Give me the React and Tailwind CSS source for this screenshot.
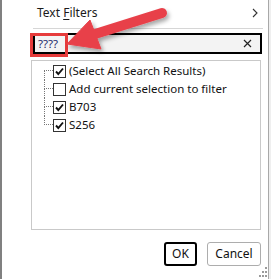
import React from 'react';

const ITEMS = [
  { label: '(Select All Search Results)', checked: true },
  { label: 'Add current selection to filter', checked: false },
  { label: 'B703', checked: true },
  { label: 'S256', checked: true },
];

const CheckBox = ({ checked }) => (
  <span className="w-[13px] h-[13px] border border-[#333] bg-white flex items-center justify-center flex-shrink-0">
    {checked && (
      <svg width="11" height="11" viewBox="0 0 11 11">
        <path d="M2 5.5 L4.3 8 L9 2.5" fill="none" stroke="#111" strokeWidth="1.9" />
      </svg>
    )}
  </span>
);

const TreeRow = ({ label, checked, first, last }) => (
  <div className="flex items-center h-[18px] pl-[12px]">
    {/* Dotted tree connector */}
    <div className="w-[9px] self-stretch flex flex-col">
      <div className={`h-[9px] border-b border-dotted border-[#777] ${first ? '' : 'border-l'}`} />
      <div className={`flex-1 border-dotted border-[#777] ${last ? '' : 'border-l'}`} />
    </div>
    <CheckBox checked={checked} />
    <span className="ml-[3px] text-[#111] whitespace-nowrap leading-none">{label}</span>
  </div>
);

export default function App() {
  return (
    <div className="relative w-[271px] h-[279px] bg-white overflow-hidden flex font-['Noto_Sans',sans-serif] text-[11.5px]">
      <div className="w-[269px] h-full border-l-2 border-l-[#808080] border-r border-r-[#a8a8a8] flex flex-col pl-[29px] pr-[5px]">
        {/* Header */}
        <div className="h-[28px] flex items-center justify-between pl-[6px] pr-[5px] pb-[2px]">
          <span className="text-[#1a1a1a] text-[12px]">
            Text <span className="underline underline-offset-2">F</span>ilters
          </span>
          <svg width="6" height="10" viewBox="0 0 6 10">
            <path d="M1 1 L5 5 L1 9" fill="none" stroke="#333" strokeWidth="1.1" />
          </svg>
        </div>
        <div className="h-px bg-[#d6d6d6] ml-[2px]" />

        {/* Search box */}
        <div className="mt-[4px] ml-[2px] mr-[1px] h-[21px] border-2 border-black bg-[#f3f3f3] flex items-center justify-between pl-[3px] pr-[8px]">
          <span className="text-[#1d2a6b] leading-none">????</span>
          <svg width="9" height="9" viewBox="0 0 9 9">
            <path d="M1 1 L8 8 M8 1 L1 8" stroke="#222" strokeWidth="1.2" />
          </svg>
        </div>

        {/* Results tree */}
        <div className="mt-[6px] mr-[2px] h-[170px] border border-[#c9c9c9] pt-[1px]">
          {ITEMS.map((it, i) => (
            <TreeRow key={it.label} {...it} first={i === 0} last={i === ITEMS.length - 1} />
          ))}
        </div>

        {/* Buttons */}
        <div className="mt-[12px] mr-[2px] flex justify-end gap-[10px]">
          <button className="w-[33px] h-[24px] border-2 border-black rounded-[3px] bg-white text-[#111] text-[12px] leading-none">OK</button>
          <button className="w-[54px] h-[24px] border border-[#adadad] rounded-[3px] bg-white text-[#111] text-[12px] leading-none">Cancel</button>
        </div>
      </div>
      <div className="w-[2px] h-full bg-[#efefef]" />

      {/* Annotation: red box */}
      <div className="absolute left-[30px] top-[33px] w-[38px] h-[24px] border-[3px] border-[#e63b3b]" />

      {/* Annotation: red arrow */}
      <svg className="absolute left-0 top-0 pointer-events-none" width="271" height="279" viewBox="0 0 271 279">
        <defs>
          <filter id="sh" x="-20%" y="-50%" width="140%" height="200%">
            <feDropShadow dx="2" dy="3" stdDeviation="2" floodColor="#000" floodOpacity="0.35" />
          </filter>
        </defs>
        <g filter="url(#sh)" fill="#e8414a" stroke="#e8414a">
          <line x1="92" y1="35" x2="162" y2="13" strokeWidth="10" strokeLinecap="round" />
          <polygon points="67,44 90,20 101,49" strokeWidth="1" strokeLinejoin="round" />
        </g>
      </svg>

      {/* Resize grip */}
      <svg className="absolute left-[258px] top-[265px]" width="10" height="12" viewBox="0 0 10 12">
        <g fill="#9a9a9a">
          <rect x="7" y="2" width="2" height="2" />
          <rect x="7" y="6" width="2" height="2" />
          <rect x="4" y="6" width="2" height="2" />
          <rect x="7" y="10" width="2" height="2" />
          <rect x="4" y="10" width="2" height="2" />
          <rect x="1" y="10" width="2" height="2" />
        </g>
      </svg>
    </div>
  );
}
